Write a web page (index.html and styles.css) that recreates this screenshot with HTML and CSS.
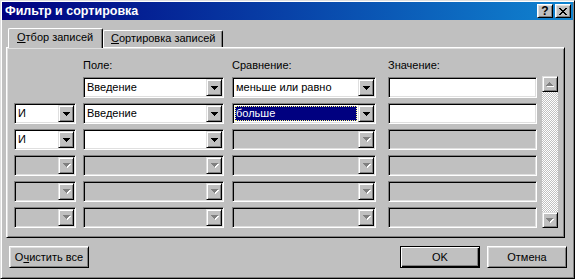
FILE: index.html
```html
<!DOCTYPE html>
<html lang="ru">
<head>
    <meta charset="UTF-8">
    <title>Фильтр и сортировка</title>
    <link rel="stylesheet" href="styles.css">
</head>
<body>
    <div class="window">
        <div class="titlebar">
            <span class="title">Фильтр и сортировка</span>
            <div class="title-btns">
                <span class="tbtn help">?</span>
                <span class="tbtn">
                    <svg width="8" height="7" viewBox="0 0 8 7"><path d="M0 0h2v1h1v1h2v-1h1v-1h2v1h-1v1h-1v1h-1v1h1v1h1v1h1v1h-2v-1h-1v-1h-2v1h-1v1h-2v-1h1v-1h1v-1h1v-1h-1v-1h-1v-1h-1z" fill="#000"/></svg>
                </span>
            </div>
        </div>

        <div class="body">
            <div class="tabs">
                <div class="tab active"><u>О</u>тбор записей</div>
                <div class="tab"><u>С</u>ортировка записей</div>
            </div>

            <div class="panel">
                <div class="grid">
                    <div class="cols">
                        <div class="row labels">
                            <span class="op"></span>
                            <span class="field">Поле:</span>
                            <span class="cmp">Сравнение:</span>
                            <span class="val">Значение:</span>
                        </div>

                        <div class="row">
                            <span class="op"></span>
                            <div class="combo field"><span class="text">Введение</span><span class="drop"><svg class="arrow" width="7" height="4" viewBox="0 0 7 4"><path d="M0 0h7v1h-1v1h-1v1h-1v1h-1v-1h-1v-1h-1v-1h-1z"/></svg></span></div>
                            <div class="combo cmp"><span class="text">меньше или равно</span><span class="drop"><svg class="arrow" width="7" height="4" viewBox="0 0 7 4"><path d="M0 0h7v1h-1v1h-1v1h-1v1h-1v-1h-1v-1h-1v-1h-1z"/></svg></span></div>
                            <div class="edit val"></div>
                        </div>

                        <div class="row">
                            <div class="combo op"><span class="text">И</span><span class="drop"><svg class="arrow" width="7" height="4" viewBox="0 0 7 4"><path d="M0 0h7v1h-1v1h-1v1h-1v1h-1v-1h-1v-1h-1v-1h-1z"/></svg></span></div>
                            <div class="combo field"><span class="text">Введение</span><span class="drop"><svg class="arrow" width="7" height="4" viewBox="0 0 7 4"><path d="M0 0h7v1h-1v1h-1v1h-1v1h-1v-1h-1v-1h-1v-1h-1z"/></svg></span></div>
                            <div class="combo cmp"><span class="text"><span class="selected">больше</span></span><span class="drop"><svg class="arrow" width="7" height="4" viewBox="0 0 7 4"><path d="M0 0h7v1h-1v1h-1v1h-1v1h-1v-1h-1v-1h-1v-1h-1z"/></svg></span></div>
                            <div class="edit val"></div>
                        </div>

                        <div class="row">
                            <div class="combo op"><span class="text">И</span><span class="drop"><svg class="arrow" width="7" height="4" viewBox="0 0 7 4"><path d="M0 0h7v1h-1v1h-1v1h-1v1h-1v-1h-1v-1h-1v-1h-1z"/></svg></span></div>
                            <div class="combo field"><span class="text"></span><span class="drop"><svg class="arrow" width="7" height="4" viewBox="0 0 7 4"><path d="M0 0h7v1h-1v1h-1v1h-1v1h-1v-1h-1v-1h-1v-1h-1z"/></svg></span></div>
                            <div class="combo cmp disabled"><span class="text"></span><span class="drop"><svg class="arrow" width="8" height="5" viewBox="0 0 8 5"><path class="hl" d="M1 1h7v1h-1v1h-1v1h-1v1h-1v-1h-1v-1h-1v-1h-1z"/><path d="M0 0h7v1h-1v1h-1v1h-1v1h-1v-1h-1v-1h-1v-1h-1z"/></svg></span></div>
                            <div class="edit val disabled"></div>
                        </div>

                        <div class="row">
                            <div class="combo op disabled"><span class="text"></span><span class="drop"><svg class="arrow" width="8" height="5" viewBox="0 0 8 5"><path class="hl" d="M1 1h7v1h-1v1h-1v1h-1v1h-1v-1h-1v-1h-1v-1h-1z"/><path d="M0 0h7v1h-1v1h-1v1h-1v1h-1v-1h-1v-1h-1v-1h-1z"/></svg></span></div>
                            <div class="combo field disabled"><span class="text"></span><span class="drop"><svg class="arrow" width="8" height="5" viewBox="0 0 8 5"><path class="hl" d="M1 1h7v1h-1v1h-1v1h-1v1h-1v-1h-1v-1h-1v-1h-1z"/><path d="M0 0h7v1h-1v1h-1v1h-1v1h-1v-1h-1v-1h-1v-1h-1z"/></svg></span></div>
                            <div class="combo cmp disabled"><span class="text"></span><span class="drop"><svg class="arrow" width="8" height="5" viewBox="0 0 8 5"><path class="hl" d="M1 1h7v1h-1v1h-1v1h-1v1h-1v-1h-1v-1h-1v-1h-1z"/><path d="M0 0h7v1h-1v1h-1v1h-1v1h-1v-1h-1v-1h-1v-1h-1z"/></svg></span></div>
                            <div class="edit val disabled"></div>
                        </div>

                        <div class="row">
                            <div class="combo op disabled"><span class="text"></span><span class="drop"><svg class="arrow" width="8" height="5" viewBox="0 0 8 5"><path class="hl" d="M1 1h7v1h-1v1h-1v1h-1v1h-1v-1h-1v-1h-1v-1h-1z"/><path d="M0 0h7v1h-1v1h-1v1h-1v1h-1v-1h-1v-1h-1v-1h-1z"/></svg></span></div>
                            <div class="combo field disabled"><span class="text"></span><span class="drop"><svg class="arrow" width="8" height="5" viewBox="0 0 8 5"><path class="hl" d="M1 1h7v1h-1v1h-1v1h-1v1h-1v-1h-1v-1h-1v-1h-1z"/><path d="M0 0h7v1h-1v1h-1v1h-1v1h-1v-1h-1v-1h-1v-1h-1z"/></svg></span></div>
                            <div class="combo cmp disabled"><span class="text"></span><span class="drop"><svg class="arrow" width="8" height="5" viewBox="0 0 8 5"><path class="hl" d="M1 1h7v1h-1v1h-1v1h-1v1h-1v-1h-1v-1h-1v-1h-1z"/><path d="M0 0h7v1h-1v1h-1v1h-1v1h-1v-1h-1v-1h-1v-1h-1z"/></svg></span></div>
                            <div class="edit val disabled"></div>
                        </div>

                        <div class="row">
                            <div class="combo op disabled"><span class="text"></span><span class="drop"><svg class="arrow" width="8" height="5" viewBox="0 0 8 5"><path class="hl" d="M1 1h7v1h-1v1h-1v1h-1v1h-1v-1h-1v-1h-1v-1h-1z"/><path d="M0 0h7v1h-1v1h-1v1h-1v1h-1v-1h-1v-1h-1v-1h-1z"/></svg></span></div>
                            <div class="combo field disabled"><span class="text"></span><span class="drop"><svg class="arrow" width="8" height="5" viewBox="0 0 8 5"><path class="hl" d="M1 1h7v1h-1v1h-1v1h-1v1h-1v-1h-1v-1h-1v-1h-1z"/><path d="M0 0h7v1h-1v1h-1v1h-1v1h-1v-1h-1v-1h-1v-1h-1z"/></svg></span></div>
                            <div class="combo cmp disabled"><span class="text"></span><span class="drop"><svg class="arrow" width="8" height="5" viewBox="0 0 8 5"><path class="hl" d="M1 1h7v1h-1v1h-1v1h-1v1h-1v-1h-1v-1h-1v-1h-1z"/><path d="M0 0h7v1h-1v1h-1v1h-1v1h-1v-1h-1v-1h-1v-1h-1z"/></svg></span></div>
                            <div class="edit val disabled"></div>
                        </div>
                    </div>

                    <div class="scrollbar">
                        <span class="sbtn"><svg class="arrow" width="8" height="5" viewBox="0 0 8 5"><path class="hl" d="M4 1h1v1h1v1h1v1h1v1h-7v-1h1v-1h1v-1h1z"/><path d="M3 0h1v1h1v1h1v1h1v1h-7v-1h1v-1h1v-1h1z"/></svg></span>
                        <span class="track"></span>
                        <span class="sbtn"><svg class="arrow" width="8" height="5" viewBox="0 0 8 5"><path class="hl" d="M1 1h7v1h-1v1h-1v1h-1v1h-1v-1h-1v-1h-1v-1h-1z"/><path d="M0 0h7v1h-1v1h-1v1h-1v1h-1v-1h-1v-1h-1v-1h-1z"/></svg></span>
                    </div>
                </div>
            </div>

            <div class="buttons">
                <button class="btn">О<u>ч</u>истить все</button>
                <span class="spacer"></span>
                <button class="btn default">OK</button>
                <button class="btn">Отмена</button>
            </div>
        </div>
    </div>
</body>
</html>
```

FILE: styles.css
```css
* {
    margin: 0;
    padding: 0;
    box-sizing: border-box;
}

body {
    font-family: "Liberation Sans", Arial, sans-serif;
    font-size: 11px;
    background: #c0c0c0;
    color: #000;
}

u {
    text-decoration: underline;
    text-underline-offset: 1px;
}

/* window frame */
.window {
    width: 575px;
    height: 279px;
    background: #c0c0c0;
    border: 1px solid;
    border-color: #dfdfdf #000 #000 #dfdfdf;
    box-shadow: inset 1px 1px #fff, inset -1px -1px #808080;
    padding: 1px;
    display: flex;
    flex-direction: column;
}

.titlebar {
    height: 18px;
    background: linear-gradient(to right, #000080, #1084d0);
    display: flex;
    align-items: center;
    justify-content: space-between;
    padding: 0 2px 0 3px;
}

.title {
    color: #fff;
    font-weight: bold;
    font-size: 12.5px;
    line-height: 18px;
}

.title-btns {
    display: flex;
    gap: 2px;
}

.tbtn {
    width: 16px;
    height: 14px;
    background: #c0c0c0;
    border: 1px solid;
    border-color: #fff #000 #000 #fff;
    box-shadow: inset 1px 1px #dfdfdf, inset -1px -1px #808080;
    display: flex;
    align-items: center;
    justify-content: center;
}

.tbtn.help {
    font-weight: bold;
    font-size: 12px;
    line-height: 12px;
}

.body {
    flex: 1;
    padding: 8px 6px 0 4px;
    display: flex;
    flex-direction: column;
}

/* tabs */
.tabs {
    display: flex;
    align-items: flex-end;
    height: 19px;
    padding-left: 2px;
}

.tab {
    height: 17px;
    padding: 0 7px;
    line-height: 15px;
    border: 1px solid;
    border-bottom: none;
    border-color: #fff #000 #000 #fff;
    box-shadow: inset -1px 0 #808080;
    border-radius: 2px 2px 0 0;
    white-space: nowrap;
}

.tab.active {
    width: 95px;
    height: 20px;
    padding-left: 8px;
    line-height: 16px;
    margin-bottom: -1px;
    position: relative;
    z-index: 1;
    background: #c0c0c0;
}

.tab + .tab {
    width: 120px;
    padding-left: 7px;
}

.panel {
    width: 559px;
    height: 191px;
    border: 1px solid;
    border-color: #fff #000 #000 #fff;
    box-shadow: inset 1px 1px #dfdfdf, inset -1px -1px #808080;
    padding: 11px 5px 0 7px;
}

.grid {
    display: flex;
    gap: 5px;
}

.cols {
    display: flex;
    flex-direction: column;
    gap: 5px;
}

.row {
    display: flex;
    height: 21px;
}

.row.labels {
    height: 13px;
    line-height: 13px;
}

.op { width: 62px; margin-right: 7px; }
.field { width: 141px; margin-right: 8px; }
.cmp { width: 144px; margin-right: 12px; }
.val { width: 149px; }

/* sunken controls */
.combo,
.edit {
    height: 21px;
    background: #fff;
    border: 1px solid;
    border-color: #808080 #fff #fff #808080;
    box-shadow: inset 1px 1px #000, inset -1px -1px #dfdfdf;
    padding: 1px;
    display: flex;
}

.combo .text {
    flex: 1;
    padding-left: 2px;
    line-height: 17px;
    white-space: nowrap;
    overflow: hidden;
}

.combo.disabled,
.edit.disabled {
    background: #c0c0c0;
}

.selected {
    display: block;
    margin: 0 1px 0 -1px;
    height: 15px;
    margin-top: 1px;
    padding-left: 1px;
    line-height: 15px;
    background: #000080;
    color: #fff;
    outline: 1px dotted #ffff80;
    outline-offset: -1px;
}

.drop,
.sbtn {
    width: 16px;
    height: 17px;
    background: #c0c0c0;
    border: 1px solid;
    border-color: #dfdfdf #000 #000 #dfdfdf;
    box-shadow: inset 1px 1px #fff, inset -1px -1px #808080;
    display: flex;
    align-items: center;
    justify-content: center;
}

.arrow path {
    fill: #000;
}

.disabled .arrow path,
.scrollbar .arrow path {
    fill: #808080;
}

.arrow path.hl,
.disabled .arrow path.hl,
.scrollbar .arrow path.hl {
    fill: #fff;
}

.drop .arrow {
    margin-left: 1px;
}

/* scrollbar */
.scrollbar {
    width: 16px;
    height: 152px;
    margin-top: 17px;
    display: flex;
    flex-direction: column;
}

.sbtn {
    height: 16px;
}

.track {
    flex: 1;
    background-color: #fff;
    background-image: conic-gradient(#c0c0c0 25%, #fff 0 50%, #c0c0c0 0 75%, #fff 0);
    background-size: 2px 2px;
}

/* dialog buttons */
.buttons {
    display: flex;
    gap: 7px;
    margin-top: 8px;
    padding-left: 3px;
}

.spacer {
    flex: 1;
}

.btn {
    width: 80px;
    height: 22px;
    font: inherit;
    color: #000;
    background: #c0c0c0;
    border: 1px solid;
    border-color: #fff #000 #000 #fff;
    box-shadow: inset 1px 1px #dfdfdf, inset -1px -1px #808080;
}

.btn.default {
    border-color: #000;
    box-shadow: inset 1px 1px #fff, inset -1px -1px #000, inset -2px -2px #808080;
}
```
